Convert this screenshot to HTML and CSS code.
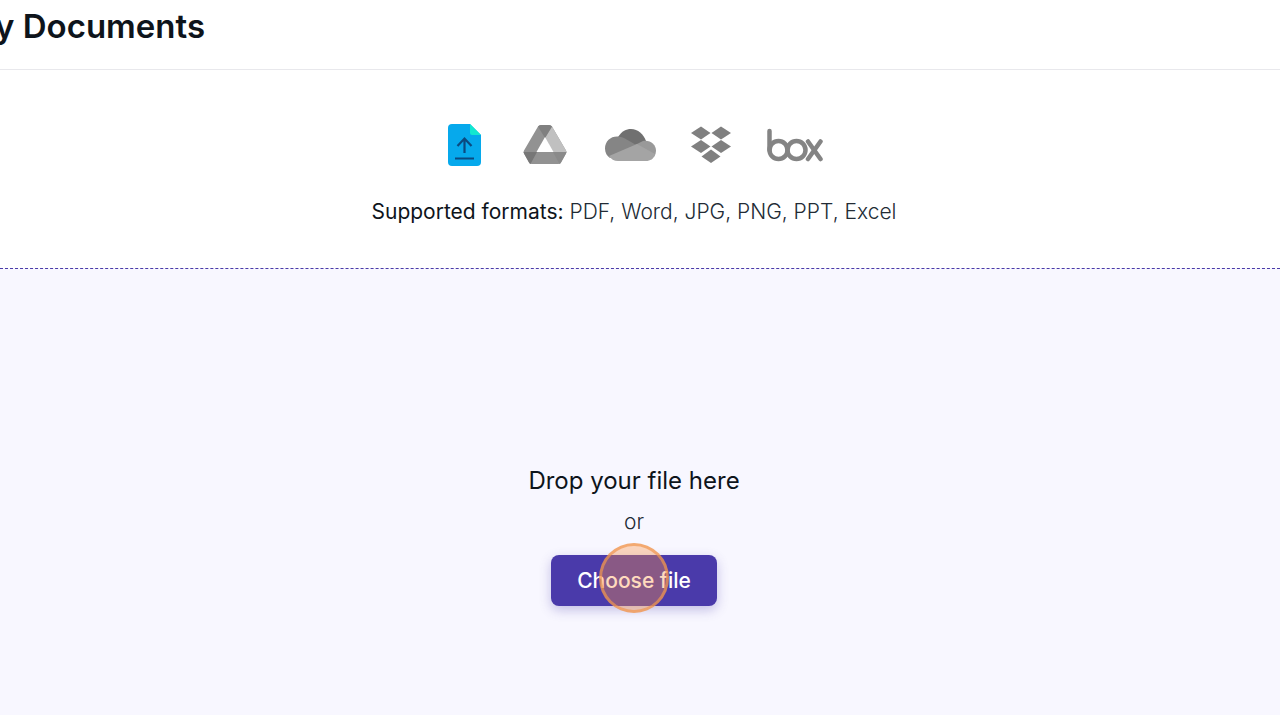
FILE: index.html
```
<!DOCTYPE html>
<html lang="en">
<head>
    <meta charset="UTF-8">
    <meta name="viewport" content="width=device-width, initial-scale=1.0">
    <title>My Documents</title>
    <link rel="stylesheet" href="styles.css">
</head>
<body>
<header class="page-header">
    <h1>y Documents</h1>
</header>

<main>
    <section class="sources">
        <div class="source-list">
            <button type="button" class="source" aria-label="Upload from device">
                <svg width="41" height="42" viewBox="-4 0 41 42">
                    <path d="M4 0H22L33 11V38a4 4 0 0 1-4 4H4a4 4 0 0 1-4-4V4a4 4 0 0 1 4-4z" fill="#06a9ec"/>
                    <path d="M22 0L33 11H24a2 2 0 0 1-2-2z" fill="#12e8d0"/>
                    <path d="M16.500 29V15M9.500 22L16.500 14.500L23.500 22M7 34.500H26" fill="none" stroke="#0b4a80" stroke-width="2.200"/>
                </svg>
            </button>
            <button type="button" class="source" aria-label="Google Drive">
                <svg width="50" height="40" viewBox="-3 0 50 40">
                    <path d="M15 1.500Q16 0 18 0H26Q28 0 29 1.500L43 25.500Q44 27 43 28.500L38 37.500Q37 39 35 39H9Q7 39 6 37.500L1 28.500Q0 27 1 25.500z" fill="#929292"/>
                    <path d="M22 13L29 1.500L43 25.500Q44 27 43.500 27H30z" fill="#c0c0c0"/>
                    <path d="M15 1.500Q16 0 18 0H26Q28 0 29 1.500L22 13z" fill="#808080"/>
                    <path d="M0.500 27H14L7.500 39Q6.500 38.500 6 37.500L1 28.500z" fill="#777"/>
                    <path d="M43.500 27H30L36.500 39Q37.500 38.500 38 37.500L43 28.500z" fill="#8a8a8a"/>
                    <path d="M22 12L30.500 27H13.500z" fill="#fff"/>
                </svg>
            </button>
            <button type="button" class="source" aria-label="OneDrive">
                <svg width="51" height="34" viewBox="0 0 51 34">
                    <path d="M13 9C17 3 21 1 26 1C33 1 38.500 6 41 13L30 19z" fill="#707070"/>
                    <path d="M5 30C2 28 0 25 0 20.500C0 13 6 8 13 8.500C15 8.500 17 9 19 10L33 18L5 30z" fill="#858585"/>
                    <path d="M30 17L38 13C46 12 51 17 51 23Q51 26 49 29z" fill="#999"/>
                    <path d="M4 28L32 16L50 26C49 31 45 33 41 33H13C9 33 6 31 4 28z" fill="#a4a4a4"/>
                </svg>
            </button>
            <button type="button" class="source" aria-label="Dropbox">
                <svg width="40" height="38" viewBox="0 0 40 38" fill="#808080">
                    <path d="M10 0.500L19.500 7L10 13.500L0 7z"/>
                    <path d="M30 0.500L40 7L30 13.500L20.500 7z"/>
                    <path d="M10 14L19.500 20.500L10 27L0 20.500z"/>
                    <path d="M30 14L40 20.500L30 27L20.500 20.500z"/>
                    <path d="M20 23.500L29.500 30.500L20 37L10.500 30.500z"/>
                </svg>
            </button>
            <button type="button" class="source" aria-label="Box">
                <svg width="58" height="34" viewBox="-1 0 58 34" fill="none" stroke="#848484" stroke-width="4.500" stroke-linecap="round">
                    <line x1="2.500" y1="3" x2="2.500" y2="22"/>
                    <circle cx="11.500" cy="22" r="9"/>
                    <circle cx="29.500" cy="22" r="9"/>
                    <line x1="41" y1="13.500" x2="53.500" y2="31"/>
                    <line x1="53.500" y1="13.500" x2="41" y2="31"/>
                </svg>
            </button>
        </div>
        <p class="formats"><strong>Supported formats:</strong> PDF, Word, JPG, PNG, PPT, Excel</p>
    </section>

    <section class="dropzone">
        <p class="drop-title">Drop your file here</p>
        <p class="drop-or">or</p>
        <div class="choose">
            <button type="button" class="choose-button">Choose file</button>
            <span class="click-marker"></span>
        </div>
    </section>
</main>
</body>
</html>
```
FILE: styles.css
```
* {
    box-sizing: border-box;
}
body {
    display: flex;
    flex-direction: column;
    min-height: 100vh;
    margin: 0;
    font-family: Inter, "Liberation Sans", sans-serif;
    color: #0e141b;
    background-color: #fff;
    overflow-x: hidden;
}
.page-header {
    padding: 6px 0 22px;
    border-bottom: 1px solid #e8e8ec;
}
h1 {
    margin: 0 0 0 -5px;
    font-size: 33px;
    font-weight: 600;
    line-height: 41px;
    white-space: nowrap;
}
main {
    display: flex;
    flex: 1;
    flex-direction: column;
}
.sources {
    padding: 52px 12px 41px 0;
}
.source-list {
    display: flex;
    justify-content: center;
    align-items: center;
    gap: 35px;
    height: 46px;
}
.source {
    display: flex;
    padding: 0;
    border: 0;
    background: none;
    cursor: pointer;
}
.formats {
    margin: 29px 0 0;
    font-size: 21px;
    font-weight: 300;
    line-height: 30px;
    text-align: center;
    color: #222b35;
}
.formats strong {
    font-weight: 400;
    color: #0e141b;
}
.dropzone {
    display: flex;
    flex: 1;
    flex-direction: column;
    align-items: center;
    padding: 194px 12px 108px 0;
    border-top: 1px dashed #4a3ba8;
    background-color: #f8f7ff;
}
.drop-title {
    margin: 0;
    font-size: 24px;
    line-height: 36px;
}
.drop-or {
    margin: 7px 0 9px;
    font-size: 21px;
    font-weight: 300;
    line-height: 32px;
    color: #222b35;
}
.choose {
    position: relative;
    margin-top: 8px;
}
.choose-button {
    padding: 10px 26px;
    border: 0;
    border-radius: 8px;
    font-family: inherit;
    font-size: 21px;
    font-weight: 500;
    line-height: 31px;
    color: #fff;
    background-color: #4a3aaa;
    box-shadow: 0 4px 12px rgba(74, 58, 170, 0.3);
    cursor: pointer;
}
/* highlight ring over the button */
.click-marker {
    position: absolute;
    top: 50%;
    left: 50%;
    width: 70px;
    height: 70px;
    margin: -38px 0 0 -35px;
    border: 3px solid rgba(240, 150, 80, 0.7);
    border-radius: 50%;
    background-color: rgba(255, 148, 66, 0.35);
    pointer-events: none;
}
```
